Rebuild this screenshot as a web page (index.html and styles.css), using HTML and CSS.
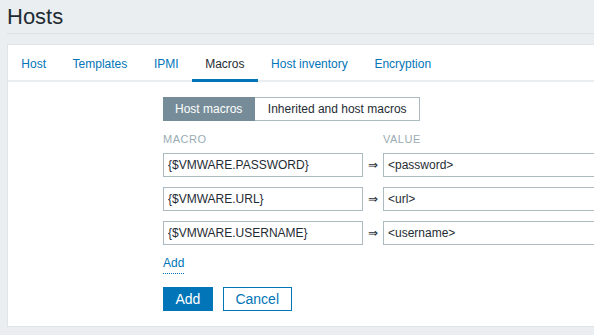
FILE: index.html
```html
<!DOCTYPE html>
<html lang="en">
  <head>
    <meta charset="UTF-8" />
    <meta name="viewport" content="width=device-width, initial-scale=1.0" />
    <title>Hosts</title>
    <link rel="stylesheet" href="styles.css">
  </head>
  <body>
    <main class="wrapper">
      <header class="page-header">
        <h1 class="page-title">Hosts</h1>
      </header>

      <section class="card">
        <ul class="tabs">
          <li class="tab"><a href="#">Host</a></li>
          <li class="tab"><a href="#">Templates</a></li>
          <li class="tab"><a href="#">IPMI</a></li>
          <li class="tab active"><a href="#">Macros</a></li>
          <li class="tab"><a href="#">Host inventory</a></li>
          <li class="tab"><a href="#">Encryption</a></li>
        </ul>

        <form class="form">
          <div class="segmented">
            <span class="segment selected">Host macros</span>
            <span class="segment">Inherited and host macros</span>
          </div>

          <div class="macro-table">
            <div class="col-label">Macro</div>
            <div></div>
            <div class="col-label">Value</div>

            <input class="input macro" type="text" value="{$VMWARE.PASSWORD}">
            <span class="arrow">&rArr;</span>
            <input class="input value" type="text" value="&lt;password&gt;">

            <input class="input macro" type="text" value="{$VMWARE.URL}">
            <span class="arrow">&rArr;</span>
            <input class="input value" type="text" value="&lt;url&gt;">

            <input class="input macro" type="text" value="{$VMWARE.USERNAME}">
            <span class="arrow">&rArr;</span>
            <input class="input value" type="text" value="&lt;username&gt;">
          </div>

          <div class="add-row">
            <a href="#" class="link-action">Add</a>
          </div>

          <div class="buttons">
            <button type="button" class="btn btn-primary">Add</button>
            <button type="button" class="btn btn-alt">Cancel</button>
          </div>
        </form>
      </section>
    </main>
  </body>
</html>
```

FILE: styles.css
```css
* {
  margin: 0;
  padding: 0;
  box-sizing: border-box;
}

html,
body {
  overflow: hidden;
}

body {
  background-color: #ebeef0;
  font-family: Arial, "Liberation Sans", sans-serif;
  font-size: 12px;
  color: #1f2c33;
}

main.wrapper {
  width: 1000px;
  padding-left: 7px;
}

header.page-header {
  height: 34px;
  border-bottom: 1px solid #dce1e4;
}

h1.page-title {
  font-size: 22px;
  font-weight: normal;
  line-height: 33px;
  color: #1f2c33;
}

section.card {
  margin-top: 10px;
  background-color: #fff;
  border: 1px solid #dfe4e7;
  padding-bottom: 15px;
}

ul.tabs {
  list-style: none;
  display: flex;
  height: 37px;
  border-bottom: 2px solid #ebeef0;
}

li.tab {
  padding: 0 13.3px;
  display: flex;
  align-items: center;
  margin-bottom: -2px;
  border-bottom: 3px solid transparent;
}

li.tab a {
  color: #0275b8;
  text-decoration: none;
  line-height: 16px;
  padding-top: 3px;
}

li.tab.active {
  border-bottom-color: #0275b8;
}

li.tab.active a {
  color: #1f2c33;
}

form.form {
  padding: 15px 0 0 155px;
}

div.segmented {
  display: flex;
  height: 24px;
}

span.segment {
  display: flex;
  align-items: center;
  padding: 0 12.5px;
  border: 1px solid #acbbc2;
  border-left: none;
  color: #1f2c33;
  line-height: 16px;
}

span.segment.selected {
  background-color: #768d99;
  border-color: #768d99;
  color: #fff;
  padding: 0 12px;
}

div.macro-table {
  display: grid;
  grid-template-columns: 200px 20px 300px;
  row-gap: 10px;
  margin-top: 10px;
  align-items: center;
}

div.col-label {
  font-size: 11px;
  line-height: 16px;
  color: #9aabb4;
  text-transform: uppercase;
  letter-spacing: 0.5px;
  margin-bottom: -4px;
}

input.input {
  height: 24px;
  border: 1px solid #acbbc2;
  padding: 0 4px;
  font-family: Arial, "Liberation Sans", sans-serif;
  font-size: 12px;
  color: #1f2c33;
  background: #fff;
  outline: none;
}

span.arrow {
  text-align: center;
  font-size: 12px;
  color: #1f2c33;
}

div.add-row {
  margin-top: 10px;
  line-height: 16px;
}

a.link-action {
  display: inline-block;
  color: #0275b8;
  text-decoration: none;
  padding-bottom: 2px;
  border-bottom: 1px dotted #0275b8;
}

div.buttons {
  display: flex;
  gap: 10px;
  margin-top: 13px;
}

button.btn {
  height: 24px;
  padding: 0 11.5px;
  font-family: Arial, "Liberation Sans", sans-serif;
  font-size: 14px;
  border: 1px solid #0275b8;
  cursor: pointer;
}

button.btn-primary {
  background-color: #0275b8;
  color: #fff;
}

button.btn-alt {
  background-color: #fff;
  color: #0275b8;
}
```
